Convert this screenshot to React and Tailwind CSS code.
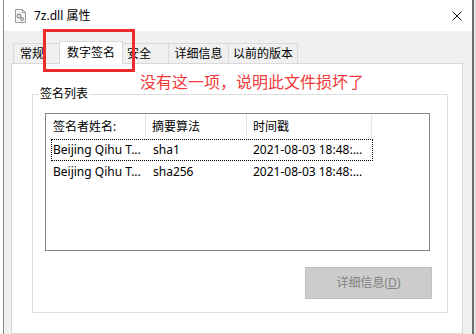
import React from 'react'

const FONT = { fontFamily: '"Noto Sans", "Noto Sans CJK SC", sans-serif' }

const tabs = [
  { label: '常规', w: 'w-[46px]', pad: 'justify-start pl-[6px]' },
  { label: '数字签名', w: 'w-[64px]', active: true },
  { label: '安全', w: 'w-[45px]', pad: 'justify-start pl-[4px]' },
  { label: '详细信息', w: 'w-[60px]', pad: 'justify-center' },
  { label: '以前的版本', w: 'w-[70px]', pad: 'justify-center' },
]

const rows = [
  ['Beijing Qihu T...', 'sha1', '2021-08-03 18:48:...'],
  ['Beijing Qihu T...', 'sha256', '2021-08-03 18:48:...'],
]

function DllIcon() {
  return (
    <svg width="11" height="14" viewBox="0 0 11 14">
      <path d="M0.5 0.5h7l3 3v10h-10z" fill="#f4f4f4" stroke="#9a9a9a" />
      <path d="M7.5 0.5v3h3" fill="none" stroke="#9a9a9a" />
      <circle cx="4" cy="7" r="1.8" fill="none" stroke="#8a8a8a" strokeWidth="1.2" />
      <circle cx="7" cy="10" r="1.4" fill="none" stroke="#8a8a8a" strokeWidth="1.1" />
    </svg>
  )
}

export default function App() {
  return (
    <div className="relative w-[476px] h-[334px] overflow-hidden bg-white flex text-[12px] text-black" style={FONT}>
      <div className="w-[3px] bg-white" />

      {/* window */}
      <div className="w-[471px] flex flex-col border-l border-l-[#8c8c8c] border-r-2 border-r-[#6e6e6e]">
        {/* title bar */}
        <div className="h-[31px] shrink-0 bg-white flex items-center pl-[11px] pr-[10px]">
          <DllIcon />
          <span className="ml-[8px] text-[12px] leading-none">7z.dll 属性</span>
          <svg className="ml-auto" width="10" height="10" viewBox="0 0 10 10">
            <path d="M0.5 0.5l9 9M9.5 0.5l-9 9" stroke="#111" strokeWidth="1" />
          </svg>
        </div>

        {/* body */}
        <div className="flex-1 bg-[#f0f0f0] pl-[7px] pr-[9px] pt-[10px] flex flex-col">
          {/* tab strip */}
          <div className="h-[22px] shrink-0 flex items-end pl-[2px]">
            {tabs.map((t, i) => (
              <div
                key={t.label}
                className={
                  t.active
                    ? `${t.w} h-[23px] -mb-[1px] relative z-10 bg-white border border-b-0 border-[#d9d9d9] flex items-center justify-center`
                    : `${t.w} h-[20px] bg-[#f0f0f0] border-t border-[#d9d9d9] ${i === 2 ? '' : 'border-l'} ${i === tabs.length - 1 ? 'border-r' : ''} flex items-center ${t.pad}`
                }
              >
                <span className="leading-none">{t.label}</span>
              </div>
            ))}
          </div>

          {/* tab page */}
          <div className="flex-1 bg-white border border-[#d9d9d9] pl-[20px] pr-[14px] pt-[30px]">
            {/* group box */}
            <div className="relative h-[219px] border border-[#dcdcdc] flex flex-col pl-[12px] pr-[15px] pt-[18px]">
              <span className="absolute left-[6px] -top-[8px] bg-white px-[1px] leading-[14px]">签名列表</span>

              {/* list view */}
              <div className="w-[385px] h-[138px] border border-[#828790] flex flex-col">
                <div className="h-[25px] shrink-0 flex items-stretch">
                  <div className="w-[100px] border-r border-[#e5e5e5] flex items-center pl-[7px]">签名者姓名:</div>
                  <div className="w-[101px] border-r border-[#e5e5e5] flex items-center pl-[6px]">摘要算法</div>
                  <div className="w-[125px] border-r border-[#e5e5e5] flex items-center pl-[6px]">时间戳</div>
                </div>
                {rows.map((r, i) => (
                  <div
                    key={i}
                    className={`ml-[5px] w-[322px] flex items-center ${i === 0 ? 'h-[22px] border border-dotted border-black' : 'h-[21px] border border-transparent'}`}
                  >
                    <div className="w-[101px] pl-[1px] whitespace-nowrap">{r[0]}</div>
                    <div className="w-[100px] whitespace-nowrap">{r[1]}</div>
                    <div className="whitespace-nowrap">{r[2]}</div>
                  </div>
                ))}
              </div>

              <div className="mt-[16px] self-end w-[127px] h-[32px] bg-[#cccccc] border border-[#bfbfbf] flex items-center justify-center text-[#838383]">
                详细信息(<span className="underline">D</span>)
              </div>
            </div>
          </div>
        </div>
      </div>

      <div className="flex-1 bg-[#e6e6e6]" />

      {/* annotation overlay */}
      <div className="absolute left-[43px] top-[29px] w-[92px] h-[43px] border-[3px] border-[#ee2c2c] pointer-events-none" />
      <div className="absolute left-[140px] top-[72px] text-[16px] leading-[20px] text-[#f23a3a] whitespace-nowrap">
        没有这一项，说明此文件损坏了
      </div>
    </div>
  )
}
